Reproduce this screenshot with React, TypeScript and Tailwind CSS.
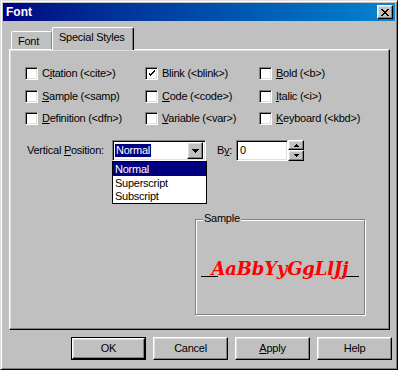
import React from "react";

const raised =
  "border border-t-white border-l-white border-r-black border-b-black shadow-[inset_-1px_-1px_#808080,inset_1px_1px_#dfdfdf]";
const sunken =
  "border border-t-[#808080] border-l-[#808080] border-r-white border-b-white shadow-[inset_1px_1px_#000,inset_-1px_-1px_#dfdfdf]";

function U({ children }: { children: React.ReactNode }) {
  return <span className="underline underline-offset-[1px]">{children}</span>;
}

function Check({ checked, children }: { checked?: boolean; children: React.ReactNode }) {
  return (
    <div className="flex items-start gap-[4px]">
      <div className={`w-[13px] h-[13px] bg-white flex items-center justify-center ${sunken}`}>
        {checked && (
          <svg width="7" height="7" viewBox="0 0 7 7" shapeRendering="crispEdges">
            <path d="M0 2h1v3h1v1h1v-1h1v-1h1v-1h1v-1h1v-2h-1v1h-1v1h-1v1h-1v1h-1v-1h-1v-1h-1z" fill="#000" />
          </svg>
        )}
      </div>
      <span className="leading-[13px]">{children}</span>
    </div>
  );
}

function Btn({ children, def }: { children: React.ReactNode; def?: boolean }) {
  const inner = (
    <div className={`w-full h-full flex items-center justify-center bg-[#c0c0c0] ${raised}`}>{children}</div>
  );
  return def ? (
    <div className="w-[75px] h-[23px] border border-black">{inner}</div>
  ) : (
    <div className="w-[75px] h-[23px]">{inner}</div>
  );
}

export default function App() {
  return (
    <div className="w-[398px] h-[370px] bg-[#c0c0c0] border border-t-[#dfdfdf] border-l-[#dfdfdf] border-r-black border-b-black p-[2px] shadow-[inset_1px_1px_#fff,inset_-1px_-1px_#808080] font-['Liberation_Sans',Arial,sans-serif] text-[11px] tracking-[-0.25px] text-black">
      {/* title bar */}
      <div className="h-[18px] flex items-center justify-between pl-[3px] pr-[2px] bg-gradient-to-r from-[#000080] to-[#1084d0]">
        <span className="text-white font-bold text-[12px] tracking-normal">Font</span>
        <div className={`w-[16px] h-[14px] bg-[#c0c0c0] flex items-center justify-center ${raised}`}>
          <svg width="8" height="7" viewBox="0 0 8 7" shapeRendering="crispEdges">
            <path d="M0 0h2v1h1v1h2v-1h1v-1h2v1h-1v1h-1v1h-1v1h1v1h1v1h1v1h-2v-1h-1v-1h-2v1h-1v1h-2v-1h1v-1h1v-1h1v-1h-1v-1h-1z" fill="#000" />
          </svg>
        </div>
      </div>

      <div className="pl-[6px] pt-[6px]">
        {/* tabs */}
        <div className="flex items-end h-[22px] pl-[2px]">
          <div className="w-[41px] h-[18px] border-t border-l border-white border-r border-r-[#808080] rounded-tl-[2px] pl-[6px] pt-[3px] leading-[13px]">
            Font
          </div>
          <div className="relative z-10 -mb-[1px] w-[82px] h-[23px] bg-[#c0c0c0] border-t border-l border-white border-r border-r-black rounded-tl-[2px] rounded-tr-[2px] shadow-[inset_-1px_0_#808080] pl-[6px] pt-[3px] leading-[13px]">
            Special Styles
          </div>
        </div>

        {/* panel */}
        <div className={`w-[381px] h-[281px] ${raised} pl-[15px] pt-[17px]`}>
          <div className="grid grid-cols-[120px_114px_1fr] grid-rows-[23px_22px_22px]">
            <Check>
              C<U>i</U>tation (&lt;cite&gt;)
            </Check>
            <Check checked>Blink (&lt;blink&gt;)</Check>
            <Check>
              <U>B</U>old (&lt;b&gt;)
            </Check>
            <Check>
              <U>S</U>ample (&lt;samp)
            </Check>
            <Check>
              <U>C</U>ode (&lt;code&gt;)
            </Check>
            <Check>
              <U>I</U>talic (&lt;i&gt;)
            </Check>
            <Check>
              <U>D</U>efinition (&lt;dfn&gt;)
            </Check>
            <Check>
              <U>V</U>ariable (&lt;var&gt;)
            </Check>
            <Check>
              <U>K</U>eyboard (&lt;kbd&gt;)
            </Check>
          </div>

          {/* vertical position row */}
          <div className="flex items-center mt-[6px] pl-[2px] h-[21px]">
            <span className="w-[85px]">
              Vertical <U>P</U>osition:
            </span>
            <div className="relative w-[94px] h-[21px]">
              <div className={`w-full h-full bg-white flex items-center pl-[2px] pr-[2px] ${sunken}`}>
                <div className="flex-1">
                  <span className="bg-[#000080] text-white px-[1px] leading-[13px] inline-block outline-dotted outline-1 outline-[#ffff80]">
                    Normal
                  </span>
                </div>
                <div className={`w-[16px] h-[17px] bg-[#c0c0c0] flex items-center justify-center ${raised}`}>
                  <svg width="7" height="4" viewBox="0 0 7 4" shapeRendering="crispEdges">
                    <path d="M0 0h7v1h-1v1h-1v1h-1v1h-1v-1h-1v-1h-1v-1h-1z" fill="#000" />
                  </svg>
                </div>
              </div>
              <div className="absolute left-0 top-full w-[95px] bg-white border border-black z-20">
                <div className="h-[14px] bg-[#000080] text-white pl-[2px] leading-[14px]">Normal</div>
                <div className="h-[14px] pl-[2px] leading-[14px]">Superscript</div>
                <div className="h-[13px] pl-[2px] leading-[13px]">Subscript</div>
              </div>
            </div>
            <span className="ml-[11px] w-[19px]">
              B<U>y</U>:
            </span>
            <div className={`w-[52px] h-[21px] bg-white pl-[3px] flex items-center ${sunken}`}>0</div>
            <div className="flex flex-col w-[16px] h-[21px]">
              <div className={`h-[10px] bg-[#c0c0c0] flex items-center justify-center ${raised}`}>
                <svg width="5" height="3" viewBox="0 0 5 3" shapeRendering="crispEdges">
                  <path d="M2 0h1v1h1v1h1v1h-5v-1h1v-1h1z" fill="#000" />
                </svg>
              </div>
              <div className={`h-[11px] bg-[#c0c0c0] flex items-center justify-center ${raised}`}>
                <svg width="5" height="3" viewBox="0 0 5 3" shapeRendering="crispEdges">
                  <path d="M0 0h5v1h-1v1h-1v1h-1v-1h-1v-1h-1z" fill="#000" />
                </svg>
              </div>
            </div>
          </div>

          {/* sample group */}
          <div className="relative mt-[58px] ml-[170px] w-[170px] h-[96px] border border-[#808080] shadow-[inset_1px_1px_#fff,1px_1px_#fff]">
            <span className="absolute -top-[8px] left-[7px] bg-[#c0c0c0] px-[1px] leading-[13px]">Sample</span>
            <div className="flex items-end justify-center mt-[39px] px-[5px]">
              <div className="flex-1 h-[1px] bg-black mb-[2px]" />
              <span className="relative -mx-[6px] font-['DejaVu_Serif',serif] font-bold italic text-[18px] leading-[20px] tracking-[-0.2px] text-[#f00]">
                AaBbYyGgLlJj
              </span>
              <div className="flex-1 h-[1px] bg-black mb-[2px]" />
            </div>
          </div>
        </div>

        {/* buttons */}
        <div className="flex gap-[7px] mt-[7px] pl-[62px]">
          <Btn def>OK</Btn>
          <Btn>Cancel</Btn>
          <Btn>
            <span>
              <U>A</U>pply
            </span>
          </Btn>
          <Btn>Help</Btn>
        </div>
      </div>
    </div>
  );
}
